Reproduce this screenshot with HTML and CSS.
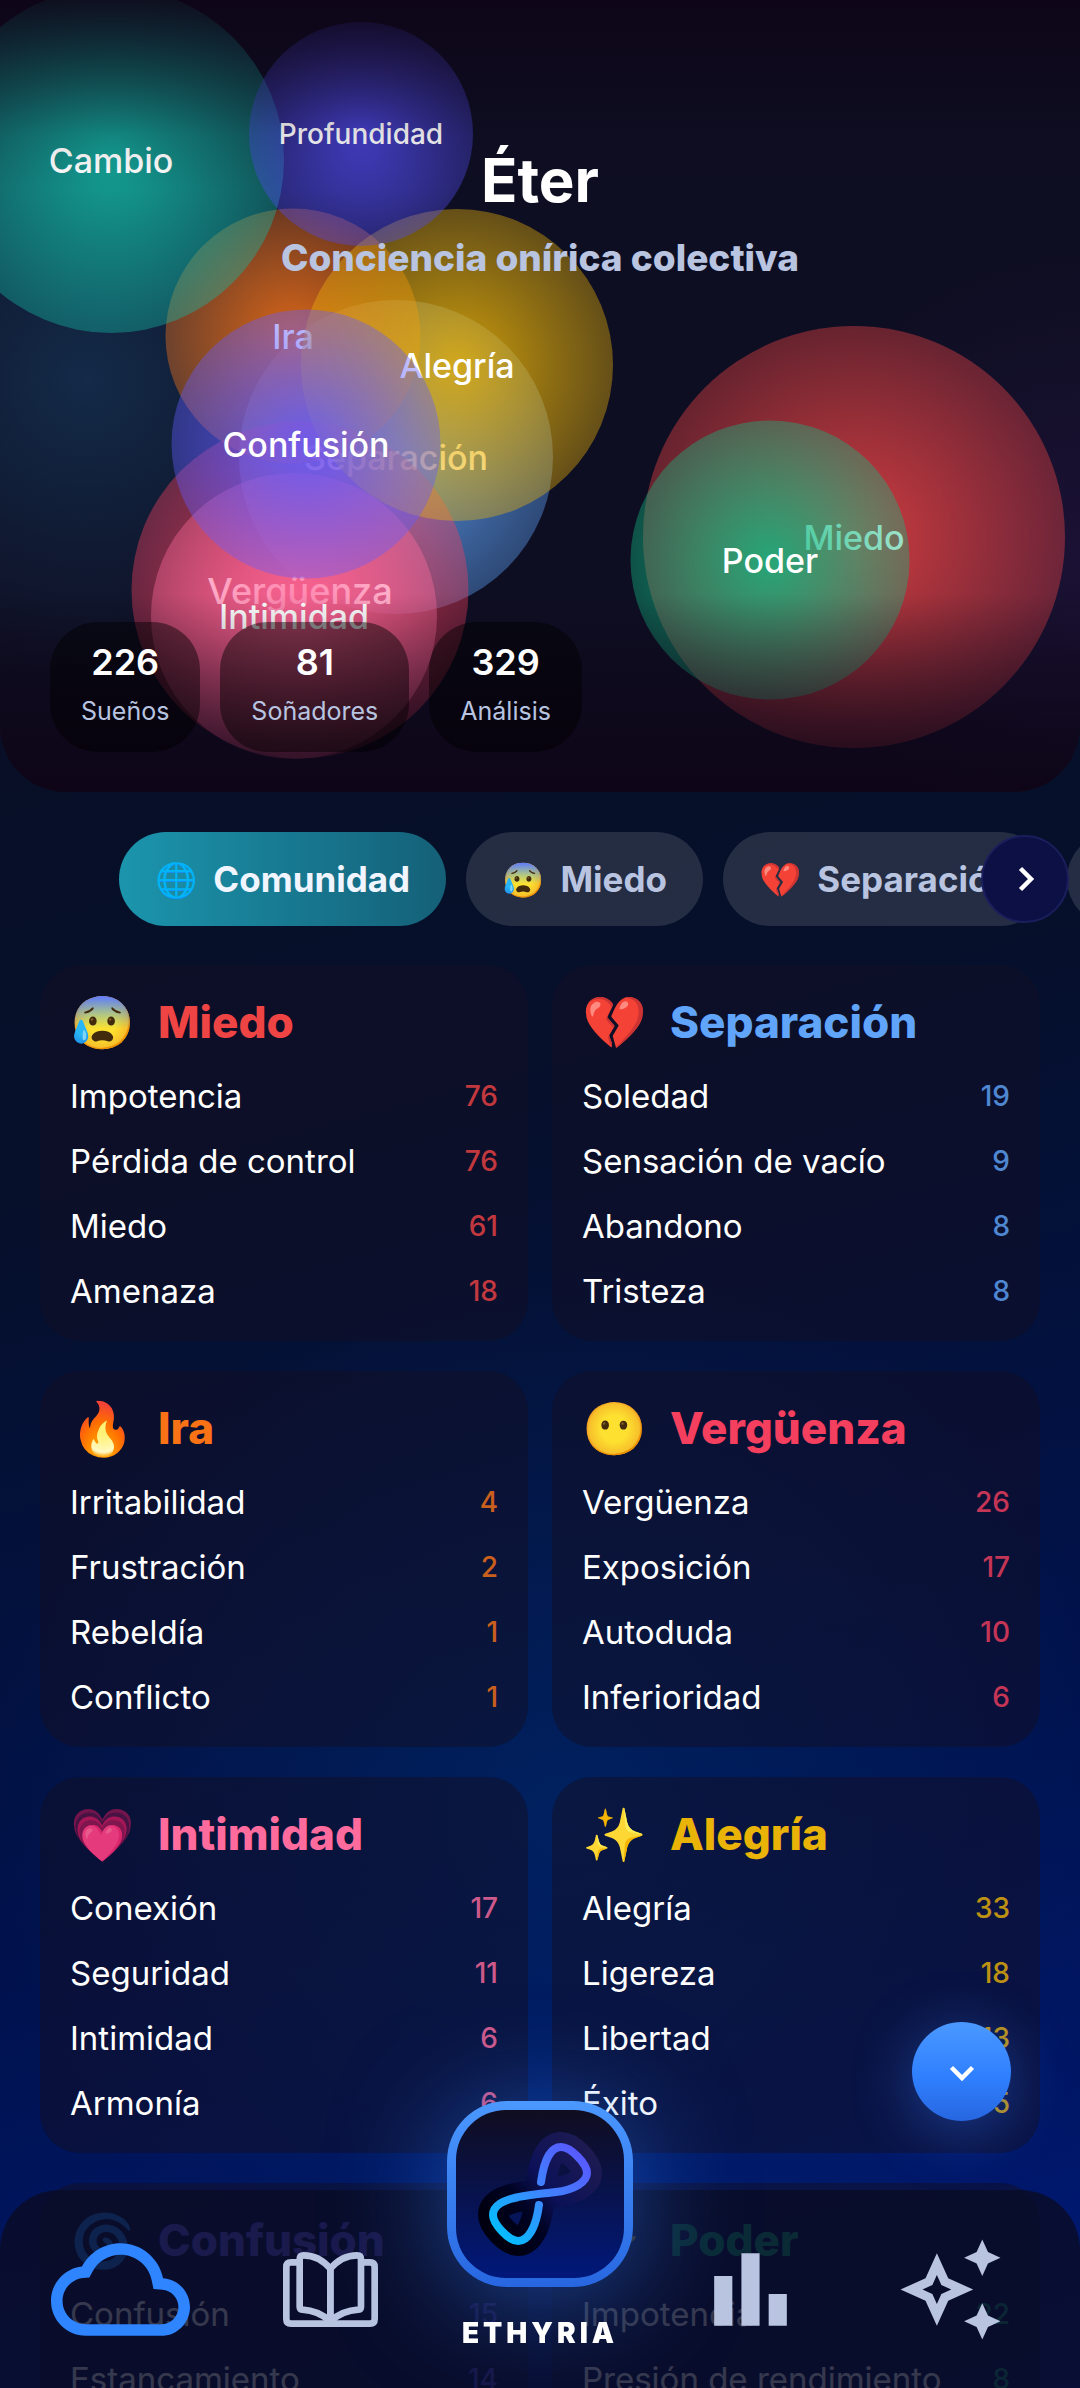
FILE: index.html
```html
<!DOCTYPE html>
<html lang="es">
<head>
  <meta charset="UTF-8" />
  <meta name="viewport" content="width=device-width, initial-scale=1.0" />
  <title>Ethyria</title>
  <link rel="stylesheet" href="styles.css">
</head>
<body>
  <main class="screen">
    <header class="hero">
      <div class="bubbles">
        <div class="bubble miedo">Miedo</div>
        <div class="bubble separacion">Separación</div>
        <div class="bubble ira">Ira</div>
        <div class="bubble verguenza">Vergüenza</div>
        <div class="bubble intimidad">Intimidad</div>
        <div class="bubble alegria">Alegría</div>
        <div class="bubble confusion">Confusión</div>
        <div class="bubble poder">Poder</div>
        <div class="bubble cambio">Cambio</div>
        <div class="bubble profundidad">Profundidad</div>
      </div>
      <div class="hero-content">
        <div class="hero-title">
          <h1>Éter</h1>
          <p>Conciencia onírica colectiva</p>
        </div>
        <div class="stats">
          <div class="stat"><strong>226</strong><span>Sueños</span></div>
          <div class="stat"><strong>81</strong><span>Soñadores</span></div>
          <div class="stat"><strong>329</strong><span>Análisis</span></div>
        </div>
      </div>
    </header>

    <div class="tabs-wrap">
      <div class="tabs">
        <button class="tab active"><span>🌐</span> Comunidad</button>
        <button class="tab"><span>😰</span> Miedo</button>
        <button class="tab"><span>💔</span> Separación</button>
        <button class="tab"><span>🔥</span> Ira</button>
      </div>
      <button class="tabs-next" aria-label="Siguiente">
        <svg viewBox="0 0 24 24"><path d="M9 5l7 7-7 7" /></svg>
      </button>
    </div>

    <div class="cards">
      <section class="card c-miedo">
        <h2><span>😰</span> Miedo</h2>
        <ul>
          <li>Impotencia <b>76</b></li>
          <li>Pérdida de control <b>76</b></li>
          <li>Miedo <b>61</b></li>
          <li>Amenaza <b>18</b></li>
        </ul>
      </section>
      <section class="card c-separacion">
        <h2><span>💔</span> Separación</h2>
        <ul>
          <li>Soledad <b>19</b></li>
          <li>Sensación de vacío <b>9</b></li>
          <li>Abandono <b>8</b></li>
          <li>Tristeza <b>8</b></li>
        </ul>
      </section>
      <section class="card c-ira">
        <h2><span>🔥</span> Ira</h2>
        <ul>
          <li>Irritabilidad <b>4</b></li>
          <li>Frustración <b>2</b></li>
          <li>Rebeldía <b>1</b></li>
          <li>Conflicto <b>1</b></li>
        </ul>
      </section>
      <section class="card c-verguenza">
        <h2><span>😶</span> Vergüenza</h2>
        <ul>
          <li>Vergüenza <b>26</b></li>
          <li>Exposición <b>17</b></li>
          <li>Autoduda <b>10</b></li>
          <li>Inferioridad <b>6</b></li>
        </ul>
      </section>
      <section class="card c-intimidad">
        <h2><span>💗</span> Intimidad</h2>
        <ul>
          <li>Conexión <b>17</b></li>
          <li>Seguridad <b>11</b></li>
          <li>Intimidad <b>6</b></li>
          <li>Armonía <b>6</b></li>
        </ul>
      </section>
      <section class="card c-alegria">
        <h2><span>✨</span> Alegría</h2>
        <ul>
          <li>Alegría <b>33</b></li>
          <li>Ligereza <b>18</b></li>
          <li>Libertad <b>13</b></li>
          <li>Éxito <b>5</b></li>
        </ul>
      </section>
      <section class="card c-confusion">
        <h2><span>🌀</span> Confusión</h2>
        <ul>
          <li>Confusión <b>15</b></li>
          <li>Estancamiento <b>14</b></li>
        </ul>
      </section>
      <section class="card c-poder">
        <h2><span>⚡</span> Poder</h2>
        <ul>
          <li>Impotencia <b>22</b></li>
          <li>Presión de rendimiento <b>8</b></li>
        </ul>
      </section>
    </div>
  </main>

  <button class="fab" aria-label="Bajar">
    <svg viewBox="0 0 24 24"><path d="M5 9l7 7 7-7" /></svg>
  </button>

  <nav class="bottom-nav">
    <a href="#eter" class="current" aria-label="Éter">
      <svg class="icon-cloud" viewBox="0 0 24 24"><path d="M19.35 10.04C18.67 6.59 15.64 4 12 4 9.11 4 6.6 5.64 5.35 8.04 2.34 8.36 0 10.91 0 14c0 3.31 2.69 6 6 6h13c2.76 0 5-2.24 5-5 0-2.64-2.05-4.78-4.65-4.96zM19 18H6c-2.21 0-4-1.79-4-4 0-2.05 1.53-3.76 3.56-3.97l1.07-.11.5-.95C8.08 7.14 9.94 6 12 6c2.62 0 4.88 1.86 5.39 4.43l.3 1.5 1.53.11c1.56.1 2.78 1.41 2.78 2.96 0 1.65-1.35 3-3 3z" /></svg>
    </a>
    <a href="#diario" aria-label="Diario">
      <svg class="icon-book" viewBox="0 0 285 225">
        <path d="M50 31H24Q10 31 10 45V201Q10 215 24 215H261Q275 215 275 201V45Q275 31 261 31H235" />
        <path d="M142 50C118 22 88 10 62 10Q50 10 50 22V164Q50 172 58 173C95 175 122 190 142 208Z" />
        <path d="M142 50C166 22 196 10 222 10Q234 10 234 22V164Q234 172 226 173C189 175 162 190 142 208Z" />
      </svg>
    </a>
    <a href="#inicio" class="home">
      <span class="logo">
        <svg viewBox="0 0 168 168">
          <defs>
            <linearGradient id="stroke" x1="40" y1="130" x2="130" y2="40" gradientUnits="userSpaceOnUse">
              <stop offset="0" stop-color="#00c3ff" />
              <stop offset="0.5" stop-color="#3d86ff" />
              <stop offset="1" stop-color="#5a55ff" />
            </linearGradient>
            <linearGradient id="halo" x1="40" y1="120" x2="135" y2="45" gradientUnits="userSpaceOnUse">
              <stop offset="0" stop-color="#000010" />
              <stop offset="0.3" stop-color="#000322" />
              <stop offset="0.55" stop-color="#0c1158" />
              <stop offset="1" stop-color="#1d1a52" />
            </linearGradient>
          </defs>
          <path class="halo" d="M85 72C88 50 95 37 105 37C115 37 131 54 131 63C131 72 118 80 100 82C78 85 37 86 37 105C37 114 53 131 62 131C72 131 80 118 83 95" />
          <path class="line" d="M85 72C88 50 95 37 105 37C115 37 131 54 131 63C131 72 118 80 100 82C78 85 37 86 37 105C37 114 53 131 62 131C72 131 80 118 83 95" />
        </svg>
      </span>
      <span class="brand">ETHYRIA</span>
    </a>
    <a href="#estadisticas" aria-label="Estadísticas">
      <svg viewBox="0 0 24 24"><path d="M4 9h4v11H4zM16 13h4v7h-4zM10 4h4v16h-4z" /></svg>
    </a>
    <a href="#explorar" aria-label="Explorar">
      <svg viewBox="0 0 24 24"><path d="M19 9l1.25-2.75L23 5l-2.75-1.25L19 1l-1.25 2.75L15 5l2.75 1.25L19 9zm0 6l-1.25 2.75L15 19l2.75 1.25L19 23l1.25-2.75L23 19l-2.75-1.25L19 15zM11.5 9.5L9 4 6.5 9.5 1 12l5.5 2.5L9 20l2.5-5.5L17 12l-5.5-2.5zm-1.51 3.49L9 15.17l-.99-2.18L5.83 12l2.18-.99L9 8.83l.99 2.18 2.18.99-2.18.99z" /></svg>
    </a>
  </nav>
</body>
</html>
```
FILE: styles.css
```css
* {
  box-sizing: border-box;
}

body {
  margin: 0;
  height: 100vh;
  overflow: hidden;
  color: white;
  font-family: Inter, "Noto Color Emoji", sans-serif;
  background:
    radial-gradient(circle at 52% 76%, rgba(0, 60, 130, 0.35), transparent 30%),
    linear-gradient(165deg, #0b0e20 0%, #06102b 45%, #00124f 75%, #001a78 100%);
}

button {
  border: none;
  padding: 0;
  font: inherit;
  color: inherit;
  cursor: pointer;
}

h1, h2, p, ul {
  margin: 0;
  padding: 0;
}

.screen {
  height: 100vh;
  overflow: hidden;
}

/* hero */

.hero {
  position: relative;
  height: 792px;
  overflow: hidden;
  border-radius: 0 0 66px 66px;
  background:
    radial-gradient(circle at 8% 48%, rgba(24, 70, 110, 0.5), transparent 300px),
    radial-gradient(circle at 100% 70%, rgba(40, 20, 70, 0.5), transparent 300px),
    #0e0e22;
}

.bubbles {
  position: absolute;
  inset: 0;
}

.bubbles::after {
  content: "";
  position: absolute;
  inset: 0;
  background: linear-gradient(rgba(14, 4, 22, 0.85), rgba(14, 4, 22, 0.45) 9%, rgba(14, 4, 22, 0.12) 17%, transparent 24%, transparent 75%, rgba(14, 4, 22, 0.9));
}

.bubble {
  position: absolute;
  transform: translate(-50%, -50%);
  aspect-ratio: 1;
  border-radius: 50%;
  display: flex;
  align-items: center;
  justify-content: center;
  font-size: 34px;
  font-weight: 500;
  background: radial-gradient(circle, rgb(var(--c) / 0.86), rgb(var(--c) / 0.4) 70%);
}

.bubble.miedo { --c: 239 68 68; width: 422px; left: calc(50% + 314px); top: 537px; }
.bubble.separacion { --c: 96 165 250; width: 314px; left: calc(50% - 144px); top: 457px; }
.bubble.ira { --c: 249 115 22; width: 255px; left: calc(50% - 247px); top: 336px; }
.bubble.verguenza { --c: 244 63 94; width: 337px; left: calc(50% - 240px); top: 590px; font-size: 36px; }
.bubble.intimidad { --c: 255 107 157; width: 286px; left: calc(50% - 246px); top: 616px; }
.bubble.alegria { --c: 234 179 8; width: 312px; left: calc(50% - 83px); top: 365px; }
.bubble.confusion { --c: 99 91 255; width: 269px; left: calc(50% - 234px); top: 444px; }
.bubble.poder { --c: 16 185 129; width: 279px; left: calc(50% + 230px); top: 560px; }
.bubble.cambio { --c: 20 184 166; width: 346px; left: calc(50% - 429px); top: 160px; }
.bubble.profundidad { --c: 79 74 235; width: 224px; left: calc(50% - 179px); top: 134px; font-size: 28px; }

.hero-content {
  position: relative;
  height: 100%;
  display: flex;
  flex-direction: column;
  justify-content: space-between;
  padding: 138px 50px 40px;
}

.hero-title {
  text-align: center;
}

h1 {
  font-size: 60px;
  line-height: 84px;
  font-weight: 700;
}

.hero-title p {
  margin-top: 9px;
  font-size: 37px;
  line-height: 54px;
  font-weight: 800;
  color: #b8c4e0;
}

.stats {
  display: flex;
  gap: 20px;
}

.stat {
  height: 130px;
  padding: 16px 31px;
  border-radius: 48px;
  background: rgba(0, 0, 0, 0.45);
  display: flex;
  flex-direction: column;
  align-items: center;
}

.stat strong {
  font-size: 36px;
  line-height: 48px;
  font-weight: 600;
}

.stat span {
  font-size: 25px;
  line-height: 50px;
  color: #b8c4e0;
}

/* category tabs */

.tabs-wrap {
  position: relative;
  margin-top: 40px;
}

.tabs {
  display: flex;
  gap: 20px;
  padding-left: 119px;
  overflow: hidden;
}

.tab {
  flex: none;
  height: 94px;
  padding: 0 36px;
  border-radius: 47px;
  background: rgba(255, 255, 255, 0.12);
  color: #b8c4e0;
  font-size: 35px;
  font-weight: 700;
  display: flex;
  align-items: center;
  gap: 16px;
}

.tab span {
  font-size: 34px;
}

.tab.active {
  color: #f0f5ff;
  background: linear-gradient(90deg, #1b95ad, #146078);
}

.tabs-next {
  position: absolute;
  right: 11px;
  top: 3px;
  width: 88px;
  height: 88px;
  border-radius: 50%;
  border: 2px solid #1b1e5c;
  background: #0c1044;
  display: flex;
  align-items: center;
  justify-content: center;
}

.tabs-next svg, .fab svg {
  width: 36px;
  height: 36px;
  fill: none;
  stroke: white;
  stroke-width: 3;
}

/* cards */

.cards {
  display: grid;
  grid-template-columns: 1fr 1fr;
  gap: 30px 24px;
  padding: 39px 40px;
}

.card {
  min-height: 376px;
  padding: 22px 30px 18px;
  border-radius: 40px;
  background: rgba(17, 13, 36, 0.5);
}

.card h2 {
  display: flex;
  align-items: center;
  gap: 22px;
  height: 70px;
  margin-bottom: 6px;
  font-size: 44px;
  font-weight: 800;
  color: var(--c);
}

.card h2 span {
  width: 66px;
  font-size: 52px;
}

.card ul {
  list-style: none;
}

.card li {
  display: flex;
  align-items: center;
  justify-content: space-between;
  height: 65px;
  font-size: 33px;
}

.card b {
  font-size: 28px;
  font-weight: 500;
  color: var(--c);
  opacity: 0.8;
}

.c-miedo { --c: #ef4444; }
.c-separacion { --c: #60a5fa; }
.c-ira { --c: #f97316; }
.c-verguenza { --c: #f43f5e; }
.c-intimidad { --c: #ff6b9d; }
.c-alegria { --c: #eab308; }
.c-confusion { --c: #635bff; }
.c-poder { --c: #10b981; }

/* floating button */

.fab {
  position: fixed;
  right: 69px;
  bottom: 267px;
  width: 99px;
  height: 99px;
  border-radius: 50%;
  background: linear-gradient(#4b98ff, #2f80ff 55%, #2766e0);
  box-shadow: 0 10px 60px rgba(60, 130, 255, 0.4);
  display: flex;
  align-items: center;
  justify-content: center;
}

/* bottom navigation */

.bottom-nav {
  position: fixed;
  left: 0;
  right: 0;
  bottom: 0;
  height: 198px;
  padding: 0 35px 0 15px;
  border-radius: 60px 60px 0 0;
  background: rgba(10, 12, 38, 0.82);
  display: grid;
  grid-template-columns: repeat(4, 21fr) 19fr;
  grid-template-rows: 198px;
}

.bottom-nav a {
  display: flex;
  align-items: center;
  justify-content: center;
  color: #b8c4e0;
  text-decoration: none;
}

.bottom-nav a > svg {
  width: 109px;
  height: 109px;
  fill: currentColor;
}

.bottom-nav .current {
  color: #2f84ff;
}

.bottom-nav a > .icon-cloud {
  width: 139px;
  height: 139px;
}

.bottom-nav a > .icon-book {
  width: 95px;
  height: 75px;
  fill: none;
  stroke: currentColor;
  stroke-width: 20;
  stroke-linejoin: round;
}

.bottom-nav .home {
  flex-direction: column;
  justify-content: flex-end;
  gap: 31px;
  padding-bottom: 40px;
}

.logo {
  flex: none;
  width: 186px;
  height: 186px;
  padding: 9px;
  border-radius: 60px;
  background: linear-gradient(#4b98ff, #2766e0);
  box-shadow: 0 10px 110px rgba(50, 130, 255, 0.5);
}

.logo svg {
  display: block;
  border-radius: 50px;
  background: linear-gradient(#100d20, #00187a);
  fill: none;
  stroke-linecap: round;
}

.logo .halo {
  stroke: url(#halo);
  stroke-width: 30;
}

.logo .line {
  stroke: url(#stroke);
  stroke-width: 8;
}

.brand {
  color: white;
  font-size: 28px;
  line-height: 30px;
  font-weight: 900;
  letter-spacing: 4px;
}
```
